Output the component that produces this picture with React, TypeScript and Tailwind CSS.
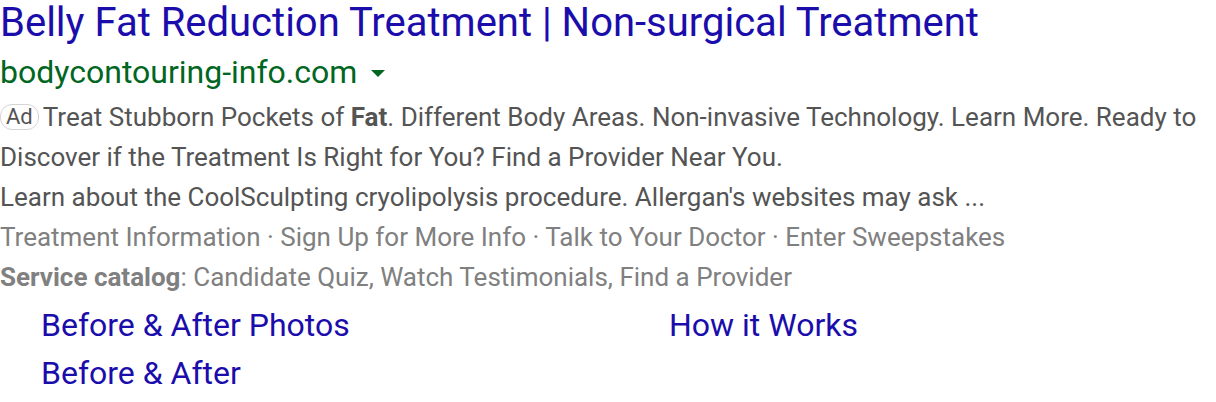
export default function App() {
  return (
    <div className="w-[1216px] h-[402px] bg-white overflow-hidden font-['Roboto',sans-serif]">
      <div className="text-[40px] leading-[46px] text-[#1a0dab] whitespace-nowrap">
        Belly Fat Reduction Treatment | Non-surgical Treatment
      </div>
      <div className="flex items-center h-[51px] text-[32px] text-[#006621] whitespace-nowrap">
        <span>bodycontouring-info.com</span>
        <span className="ml-[14px] mt-[4px] w-0 h-0 border-l-[7px] border-r-[7px] border-t-[7px] border-l-transparent border-r-transparent border-t-[#006621]" />
      </div>
      <div className="text-[26px] leading-[40px] text-[#545454] whitespace-nowrap">
        <div>
          <span className="inline-block mr-[4px] px-[5px] leading-[24px] text-[22px] border border-[#d5d5d5] rounded-[12px] text-[#545454] align-[2px]">
            Ad
          </span>
          Treat Stubborn Pockets of <b className="font-bold">Fat</b>. Different Body Areas. Non-invasive Technology. Learn More. Ready to
        </div>
        <div>Discover if the Treatment Is Right for You? Find a Provider Near You.</div>
        <div>Learn about the CoolSculpting cryolipolysis procedure. Allergan's websites may ask ...</div>
        <div className="text-[#808080]">
          Treatment Information · Sign Up for More Info · Talk to Your Doctor · Enter Sweepstakes
        </div>
        <div className="text-[#808080]">
          <b className="font-bold">Service catalog</b>: Candidate Quiz, Watch Testimonials, Find a Provider
        </div>
      </div>
      <div className="mt-[4px] grid grid-cols-[628px_1fr] pl-[41px] text-[32px] leading-[48px] text-[#1a0dab]">
        <div>Before &amp; After Photos</div>
        <div>How it Works</div>
        <div>Before &amp; After</div>
      </div>
    </div>
  );
}
